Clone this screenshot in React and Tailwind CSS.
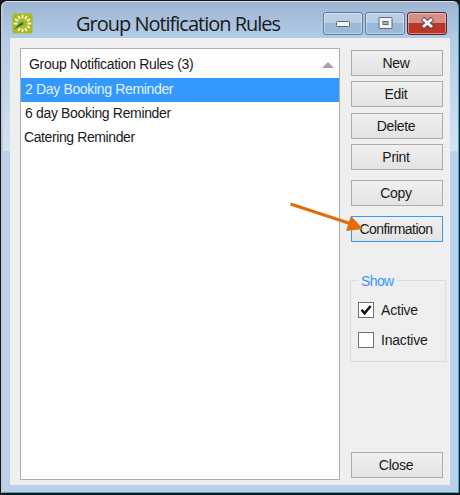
const ui = "font-['Liberation_Sans',Arial,sans-serif]";

function Button({ children, className = "", border = "border-[#acacac]", text = "tracking-[-0.3px]" }) {
  return (
    <button
      className={`flex h-[26px] w-[92px] shrink-0 items-center justify-center border bg-linear-to-b from-[#f0f0f0] to-[#e3e3e3] pr-[2px] text-sm leading-4 whitespace-nowrap ${border} ${className}`}
    >
      <span className={text}>{children}</span>
    </button>
  );
}

function Check({ label, checked, text }) {
  return (
    <label className="flex h-4 items-center gap-[7px]">
      <span className="flex size-4 items-center justify-center border border-[#707070] bg-white">
        {checked && (
          <svg width="12" height="12" viewBox="0 0 12 12" fill="none">
            <path d="M1.5 5.8 4.6 9.4 10.6 2" stroke="#111" strokeWidth="2.5" />
          </svg>
        )}
      </span>
      <span className={`text-sm leading-4 ${text}`}>{label}</span>
    </label>
  );
}

function AppIcon() {
  const rays = [0, 30, 60, 90, 120, 150, 180, 210, 270, 300, 330];
  return (
    <svg width="21" height="21" viewBox="0 0 21 21">
      <rect x="0.5" y="0.5" width="20" height="20" rx="2" fill="#a9ba20" />
      {rays.map((angle) => (
        <path
          key={angle}
          d="M10.5 2.6V4.6"
          stroke="#fbfbdf"
          strokeWidth="1.8"
          strokeLinecap="round"
          transform={`rotate(${angle} 10.5 10.5)`}
        />
      ))}
      <path d="M1.5 16.5 8.7 9.9 11.5 9.2 11 11.6Z" fill="#1c6358" />
    </svg>
  );
}

function WindowButton({ close, children }) {
  return (
    <span
      className={`flex h-[23px] w-10 items-center justify-center rounded-[3px] border pb-px shadow-[inset_0_0_0_1px_#ffffff66] ${
        close
          ? "border-[#5a252b] bg-linear-to-b from-[#d58f86] from-45% to-[#bb3624] to-50%"
          : "border-[#647c9c] bg-linear-to-b from-[#b9cee4] from-45% to-[#9bb8d7] to-50%"
      }`}
    >
      {children}
    </span>
  );
}

export default function App() {
  return (
    <div className={`h-[495px] w-[460px] overflow-hidden bg-[#15171a] pt-px pr-px pb-[2px] pl-px text-[#1a1a1a] ${ui}`}>
      <div className="relative flex h-[492px] w-[458px] flex-col rounded-t-[6px] border-t border-r border-b border-l-2 border-t-[#d6dfe8] border-r-[#29b5cf] border-b-[#29b5cf] border-l-[#c3c9d2] bg-[linear-gradient(to_bottom,#9db5d2_0,#b2cbe6_36px,#d3e3f3_149px,#b9d1ea_149px)]">
        <header className="flex h-9 shrink-0 items-start pt-[11px] pl-[9px]">
          <AppIcon />
          <h1 className="-mt-[1px] ml-[43px] w-[204px] font-['Open_Sans','Noto_Sans',sans-serif] text-[20px] leading-[24px] tracking-[-1.01px] whitespace-nowrap">
            Group Notification Rules
          </h1>
          <div className="-mt-px ml-[43px] flex gap-[2px]">
            <WindowButton>
              <svg width="14" height="7" viewBox="0 0 14 7">
                <rect x="0.5" y="1.5" width="13" height="5" rx="1" fill="#f4f4f4" stroke="#5c6678" />
              </svg>
            </WindowButton>
            <WindowButton>
              <svg width="15" height="12" viewBox="0 0 15 12">
                <rect x="1" y="0.5" width="13" height="11" rx="1" fill="#f4f4f4" stroke="#5c6678" />
                <rect x="5" y="4.5" width="5" height="3" fill="#9bb8d7" stroke="#5c6678" />
              </svg>
            </WindowButton>
            <WindowButton close>
              <svg width="15" height="12" viewBox="0 0 15 12">
                <path d="M2.5 1.5 12.5 10.5M12.5 1.5 2.5 10.5" stroke="#614850" strokeWidth="5" />
                <path d="M3 2 12 10M12 2 3 10" stroke="#f6f6f6" strokeWidth="3" />
              </svg>
            </WindowButton>
          </div>
        </header>

        <main className="ml-[7px] flex h-[447px] w-[440px] bg-[#efefef] pt-[10px] pl-[10px]">
          <section className="h-[432px] w-[320px] shrink-0 border border-[#acaeb6] bg-white text-sm">
            <div className="flex h-[29px] items-center justify-between bg-[#fdfdfd] pr-[5px] pl-2">
              <span className="tracking-[-0.3px] whitespace-nowrap">Group Notification Rules (3)</span>
              <span className="mt-[2px] border-x-[6px] border-b-[6px] border-x-transparent border-b-[#a5a5a5]" />
            </div>
            <div className="h-6 bg-[#3399ff] pl-1 leading-[23px] tracking-[-0.34px] text-[#e4f1ff]">2 Day Booking Reminder</div>
            <div className="h-6 pl-1 leading-[23px] tracking-[-0.34px]">6 day Booking Reminder</div>
            <div className="h-6 pl-[3px] leading-[23px] tracking-[-0.4px]">Catering Reminder</div>
          </section>

          <aside className="ml-[11px] flex h-[432px] w-[92px] flex-col pt-[2px]">
            <Button>New</Button>
            <Button className="mt-[5px]">Edit</Button>
            <Button className="mt-[6px]">Delete</Button>
            <Button className="mt-[5px]">Print</Button>
            <Button className="mt-[10px]">Copy</Button>
            <Button className="mt-[10px]" border="border-[#3399ff]" text="tracking-[-0.52px]">Confirmation</Button>
            <div className="relative mt-[38px] -ml-px h-[82px] w-24 border border-[#dcdcdc] pt-[21px] pl-[7px]">
              <span className="absolute -top-[8px] left-[7px] bg-[#efefef] px-[3px] text-sm leading-4 tracking-[-0.6px] text-[#3399ff]">Show</span>
              <Check label="Active" checked text="tracking-[-0.2px]" />
              <div className="h-[14px]" />
              <Check label="Inactive" text="tracking-[-0.2px]" />
            </div>
            <Button className="mt-auto mb-[2px]">Close</Button>
          </aside>
        </main>

        <svg className="absolute top-[198px] left-[283px]" width="78" height="36" viewBox="0 0 78 36">
          <path d="M4.5 4 64 23.5" stroke="#e36c0a" strokeWidth="3" />
          <path d="M65 16 77 29 60 31Z" fill="#e36c0a" />
        </svg>
      </div>
    </div>
  );
}
